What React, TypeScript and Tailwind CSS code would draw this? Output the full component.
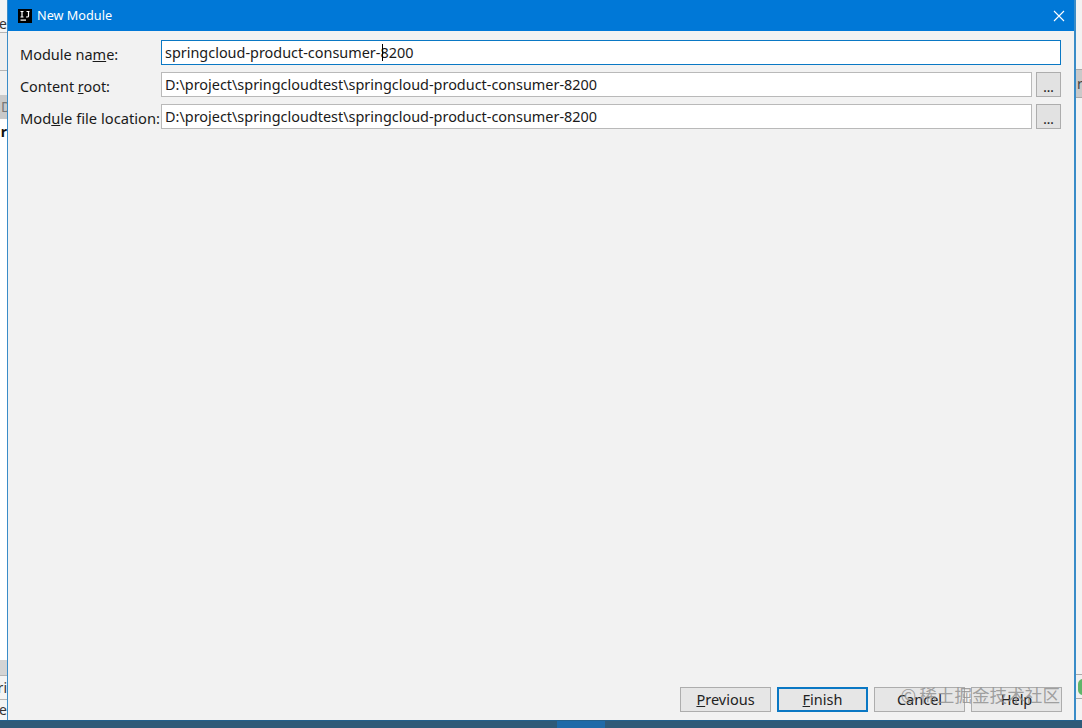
import React from "react";

const ui = { fontFamily: '"Noto Sans", "Noto Sans CJK SC", sans-serif' };

function Field({ value, full }: { value: string; full?: boolean }) {
  return (
    <div className="flex gap-1 flex-1 min-w-0">
      <div
        className={
          "flex-1 h-[25px] bg-white flex items-center pl-[3px] text-[14.43px] text-[#1a1a1a] whitespace-nowrap border " +
          (full ? "border-[#0a78c4]" : "border-[#b9b9b9]")
        }
      >
        {value}
      </div>
      {!full && (
        <div className="w-[25px] h-[25px] bg-[#e2e2e2] border border-[#adadad] flex items-center justify-center text-[13px] font-medium text-[#222] leading-none pt-[5px]">
          ...
        </div>
      )}
    </div>
  );
}

function Btn({ first, rest, focus }: { first?: string; rest: string; focus?: boolean }) {
  return (
    <div
      className={
        "w-[91px] h-[25px] bg-[#e6e6e6] flex items-center justify-center text-[14.5px] text-[#222] " +
        (focus ? "border-2 border-[#0a78c4]" : "border border-[#adadad]")
      }
    >
      {first && <span className="underline">{first}</span>}
      {rest}
    </div>
  );
}

export default function App() {
  return (
    <div className="w-[1082px] h-[728px] flex flex-col overflow-hidden bg-[#f2f2f2]" style={ui}>
      <div className="flex flex-1 min-h-0">
        {/* window behind, left */}
        <div className="w-[7px] flex flex-col text-[14px] text-[#333] overflow-hidden leading-none">
          <div className="h-[32px] bg-[#f4f4f4] flex items-end justify-end pb-[1px]">e</div>
          <div className="h-[38px] bg-[#efefef] border-t border-[#b5b5b5]" />
          <div className="h-[25px] bg-[#f0f0f0] border-t border-[#b5b5b5]" />
          <div className="h-[24px] bg-[#c9c9c9] flex items-center justify-start pl-[1px] text-[#777]">D</div>
          <div className="h-[26px] bg-white flex items-center justify-end font-bold text-[#111]">r</div>
          <div className="flex-1 bg-white" />
          <div className="h-[15px] bg-[#d4d4d4]" />
          <div className="h-[24px] bg-[#f4f4f4] border-t border-[#b5b5b5] flex items-center justify-end">ri</div>
          <div className="h-[21px] bg-[#f4f4f4] border-t border-[#b5b5b5] flex items-center justify-end">e</div>
        </div>

        {/* dialog */}
        <div className="relative flex-1 flex flex-col bg-[#f2f2f2] border-r-[2px] border-l-[1px] border-[#3a8cc8] min-w-0">
          <div className="h-[31px] bg-[#0078d7] flex items-center pl-[10px] pr-[9px] shrink-0">
            <svg width="14" height="14" viewBox="0 0 14 14" className="shrink-0">
              <rect width="14" height="14" fill="#000" />
              <rect x="2.5" y="10.5" width="5.5" height="1.2" fill="#fff" />
              <path d="M2.5 2.5h3M4 2.5v5.5M2.5 8h3M8.5 2.5h3M10.5 2.5v4.5q0 1-1.2 1H8" stroke="#fff" strokeWidth="1.2" fill="none" />
            </svg>
            <span className="ml-[5px] text-[12.7px] text-white">New Module</span>
            <svg width="12" height="12" viewBox="0 0 12 12" className="ml-auto">
              <path d="M1 1l10 10M11 1L1 11" stroke="#fff" strokeWidth="1.1" fill="none" />
            </svg>
          </div>

          <div className="flex-1 flex flex-col pt-[9px] pl-[12px] pr-[13px] gap-[7px] text-[14.5px] text-[#1a1a1a]">
            <div className="flex h-[25px]">
              <label className="w-[141px] h-[25px] shrink-0 pt-[4px] leading-[20px]">
                Module na<span className="underline">m</span>e:
              </label>
              <div className="relative flex flex-1">
                <Field value="springcloud-product-consumer-8200" full />
                <div className="absolute left-[221px] top-[4px] w-[1px] h-[17px] bg-black" />
              </div>
            </div>
            <div className="flex h-[25px]">
              <label className="w-[141px] h-[25px] shrink-0 pt-[5px] leading-[20px] text-[14.4px]">
                Content <span className="underline">r</span>oot:
              </label>
              <Field value="D:\project\springcloudtest\springcloud-product-consumer-8200" />
            </div>
            <div className="flex h-[25px]">
              <label className="w-[141px] h-[25px] shrink-0 pt-[4px] leading-[20px] whitespace-nowrap text-[14.7px]">
                Mod<span className="underline">u</span>le file location:
              </label>
              <Field value="D:\project\springcloudtest\springcloud-product-consumer-8200" />
            </div>
          </div>

          <div className="flex justify-end gap-[6px] pr-[12px] pb-[8px]">
            <Btn first="P" rest="revious" />
            <Btn first="F" rest="inish" focus />
            <Btn rest="Cancel" />
            <Btn rest="Help" />
          </div>

          <div
            className="absolute right-[14px] bottom-[13px] flex items-center gap-[3px] text-[17.6px] leading-[24px] text-[#8c8c8c]/80 whitespace-nowrap"
            style={{ fontFamily: '"Noto Sans CJK SC", sans-serif' }}
          >
            <span className="text-[19px]">©</span>
            <span>稀土掘金技术社区</span>
          </div>
        </div>

        {/* window behind, right */}
        <div className="w-[6px] flex flex-col text-[14px] text-[#444] overflow-hidden leading-none">
          <div className="h-[69px] bg-[#f3f3f3]" />
          <div className="h-[29px] bg-[#c9c9c9] border-y border-[#a9a9a9] flex items-center pl-[1px]">r</div>
          <div className="flex-1 bg-[#f3f3f3]" />
          <div className="h-[25px] bg-[#f0f0f0] border-y border-[#a9a9a9] flex items-center">
            <div className="w-[10px] h-[16px] rounded-full bg-[#5fb56a] shrink-0 ml-[2px]" />
          </div>
          <div className="h-[21px] bg-[#f3f3f3]" />
        </div>
      </div>

      {/* taskbar */}
      <div className="h-[8px] bg-[#2f5a78] border-t border-[#24608c] flex shrink-0">
        <div className="ml-[557px] w-[48px] bg-[#1f6aa8]" />
      </div>
    </div>
  );
}
